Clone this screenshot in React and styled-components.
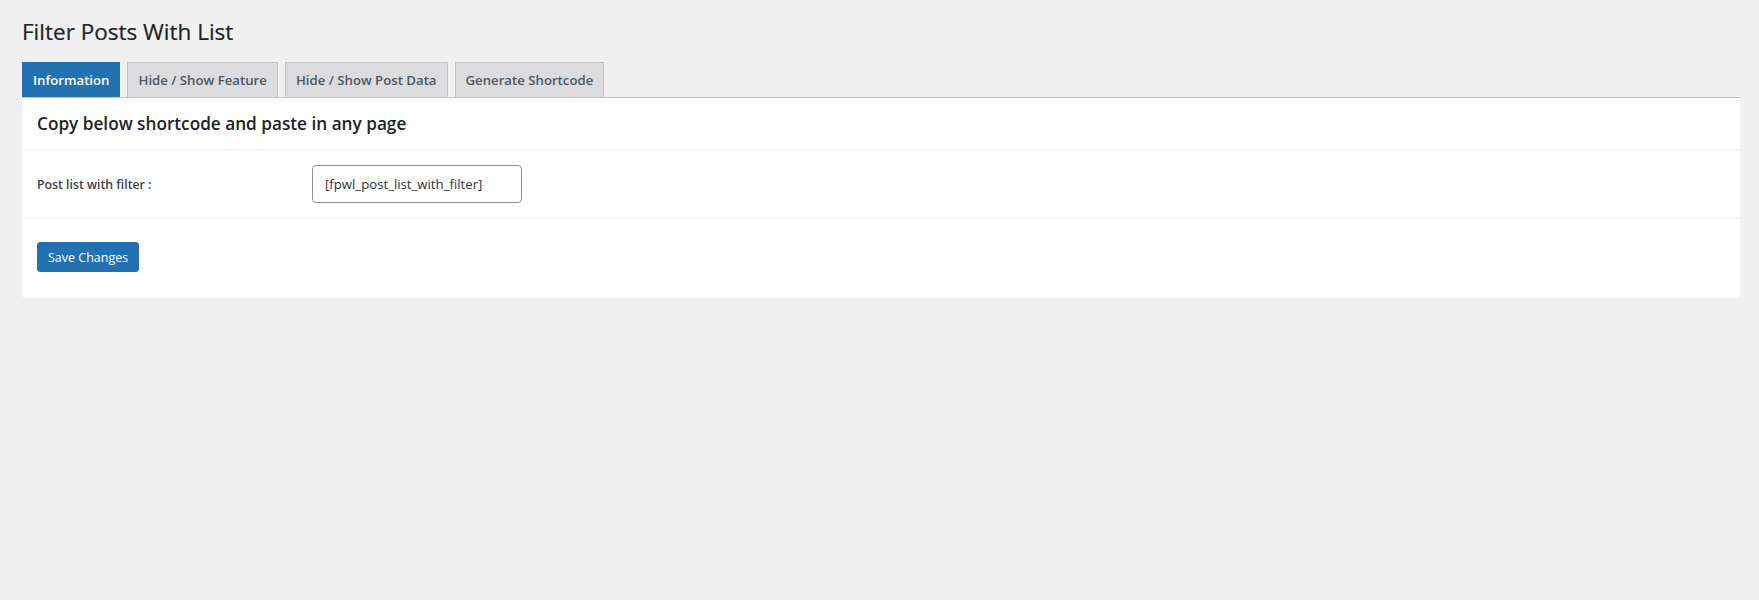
import React from "react";
import styled, { createGlobalStyle } from "styled-components";

const Global = createGlobalStyle`
  html, body { margin: 0; padding: 0; background: #f0f0f1; }
  body { font-family: "Open Sans", "Noto Sans", sans-serif; color: #1d2327; }
  * { box-sizing: border-box; }
`;

const Wrap = styled.div`
  padding: 17px 19px 40px 22px;
`;

const Title = styled.h1`
  margin: 0 0 15px 0;
  font-size: 22.5px;
  font-weight: 400;
  line-height: 30px;
  color: #1d2327;
  -webkit-text-stroke: 0.2px #1d2327;
`;

const TabBar = styled.nav`
  display: flex;
  gap: 7px;
  border-bottom: 1px solid #c3c4c7;
`;

const Tab = styled.a`
  display: block;
  padding: 5px 10px;
  font-size: 13.2px;
  font-weight: 600;
  line-height: 24px;
  border: 1px solid ${(p) => (p.$active ? "#2271b1" : "#c3c4c7")};
  border-bottom: none;
  background: ${(p) => (p.$active ? "#2271b1" : "#dcdcde")};
  color: ${(p) => (p.$active ? "#fff" : "#50575e")};
  text-decoration: none;
`;

const Card = styled.div`
  background: #fff;
  border-radius: 0 0 4px 4px;
`;

const Section = styled.div`
  padding: ${(p) => p.$pad};
  border-bottom: ${(p) => (p.$last ? "none" : "1px solid #f0f0f1")};
`;

const Heading = styled.h2`
  margin: 0;
  font-size: 17.2px;
  font-weight: 600;
  line-height: 22px;
  color: #1d2327;
`;

const Row = styled.div`
  display: grid;
  grid-template-columns: 275px 1fr;
  align-items: center;
`;

const Label = styled.label`
  font-size: 12.3px;
  font-weight: 600;
  color: #3c434a;
`;

const Input = styled.input`
  width: 210px;
  height: 38px;
  padding: 0 12px;
  font-family: inherit;
  font-size: 13.2px;
  color: #2c3338;
  border: 1px solid #8c8f94;
  border-radius: 4px;
  background: #fff;
  outline: none;
`;

const Button = styled.button`
  height: 30px;
  padding: 0 10px;
  font-family: inherit;
  font-size: 12.5px;
  color: #fff;
  background: #2271b1;
  border: 1px solid #2271b1;
  border-radius: 3px;
  cursor: pointer;
`;

export default function App() {
  const tabs = ["Information", "Hide / Show Feature", "Hide / Show Post Data", "Generate Shortcode"];
  return (
    <>
      <Global />
      <Wrap>
        <Title>Filter Posts With List</Title>
        <TabBar>
          {tabs.map((t, i) => (
            <Tab key={t} href="#" $active={i === 0}>
              {t}
            </Tab>
          ))}
        </TabBar>
        <Card>
          <Section $pad="15px 15px 14px">
            <Heading>Copy below shortcode and paste in any page</Heading>
          </Section>
          <Section $pad="15px 15px 15px">
            <Row>
              <Label>Post list with filter :</Label>
              <Input readOnly value="[fpwl_post_list_with_filter]" />
            </Row>
          </Section>
          <Section $pad="23px 15px 26px" $last>
            <Button>Save Changes</Button>
          </Section>
        </Card>
      </Wrap>
    </>
  );
}
